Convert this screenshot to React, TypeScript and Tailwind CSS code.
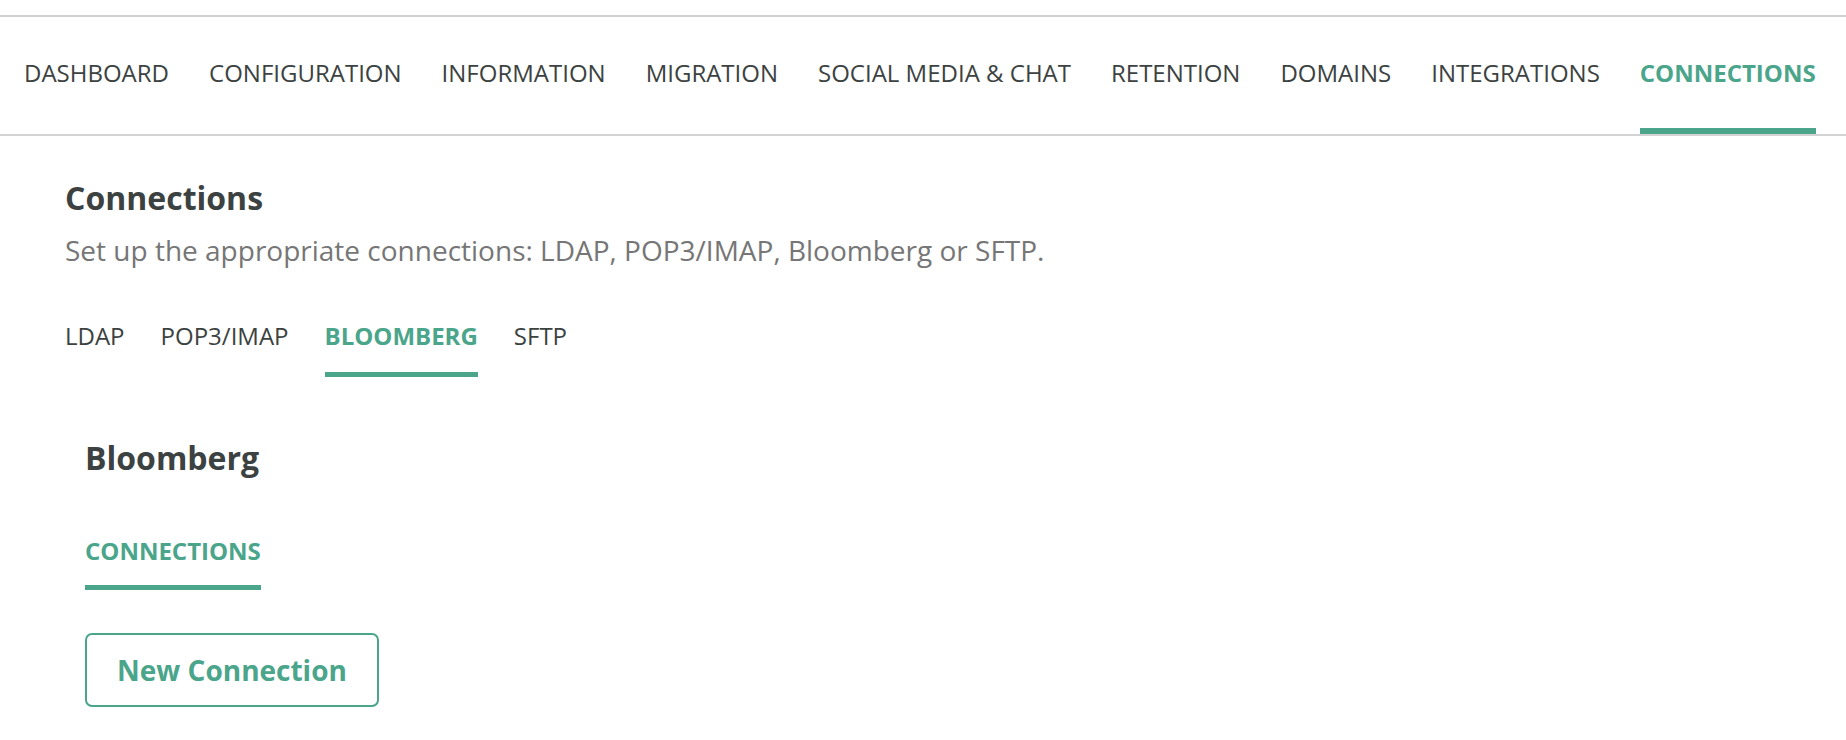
import { useState } from 'react';

const mainTabs = [
  'DASHBOARD',
  'CONFIGURATION',
  'INFORMATION',
  'MIGRATION',
  'SOCIAL MEDIA & CHAT',
  'RETENTION',
  'DOMAINS',
  'INTEGRATIONS',
  'CONNECTIONS',
];

const connectionTabs = ['LDAP', 'POP3/IMAP', 'BLOOMBERG', 'SFTP'];

export default function App() {
  const [mainTab, setMainTab] = useState('CONNECTIONS');
  const [subTab, setSubTab] = useState('BLOOMBERG');

  return (
    <div className="min-h-screen bg-white pt-[15px] font-['Open_Sans',sans-serif] text-[#3c4241]">
      <nav className="flex h-[121px] gap-[40px] border-y-2 border-[#d3d3d3] pl-[24px]">
        {mainTabs.map((t) => (
          <button
            key={t}
            type="button"
            onClick={() => setMainTab(t)}
            className={
              'flex h-full items-center border-b-[6px] pt-[1px] text-[24px] whitespace-nowrap ' +
              (mainTab === t
                ? 'border-[#4aa58b] font-bold text-[#4aa58b]'
                : 'border-transparent text-[#3c4241]')
            }
          >
            {t}
          </button>
        ))}
      </nav>

      <main className="px-[65px] pt-[42px]">
        <header>
          <h1 className="text-[32px] leading-[40px] font-bold">Connections</h1>
          <p className="mt-[13px] text-[28px] leading-[38px] text-[#767676]">
            Set up the appropriate connections: LDAP, POP3/IMAP, Bloomberg or SFTP.
          </p>
        </header>

        <div className="mt-[51px] flex gap-[36px]">
          {connectionTabs.map((t) => (
            <button
              key={t}
              type="button"
              onClick={() => setSubTab(t)}
              className={
                'border-b-[5px] pb-[20px] text-[24px] leading-[32px] ' +
                (subTab === t
                  ? 'border-[#4aa58b] font-bold text-[#4aa58b]'
                  : 'border-transparent text-[#3c4241]')
              }
            >
              {t}
            </button>
          ))}
        </div>

        <section className="pl-[20px]">
          <h2 className="mt-[61px] text-[32px] leading-[40px] font-bold">Bloomberg</h2>

          <div className="mt-[57px] flex">
            <span className="border-b-[5px] border-[#4aa58b] pb-[18px] text-[24px] leading-[32px] font-bold text-[#4aa58b]">
              CONNECTIONS
            </span>
          </div>

          <button
            type="button"
            className="mt-[43px] h-[74px] rounded-[7px] border-2 border-[#4aa58b] px-[30px] text-[28px] font-bold text-[#4aa58b]"
          >
            New Connection
          </button>
        </section>
      </main>
    </div>
  );
}
